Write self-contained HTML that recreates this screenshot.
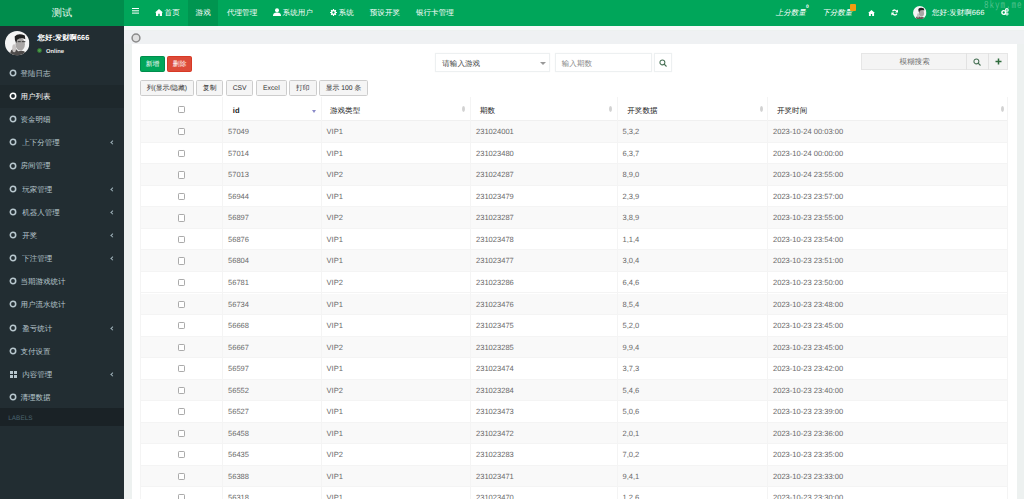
<!DOCTYPE html>
<html><head><meta charset="utf-8">
<style>
*{box-sizing:border-box;margin:0;padding:0}
html,body{width:1024px;height:499px;overflow:hidden}
body{position:relative;text-rendering:geometricPrecision;background:#edf1f0;font-family:"Liberation Sans",sans-serif;font-size:7.56px;color:#333;line-height:1}
.abs{position:absolute}
/* header */
#logo{position:absolute;left:0;top:0;width:124px;height:25.7px;background:#008d4c;color:#e6f8ee;font-size:10.2px;text-align:center;line-height:27.8px}
#nav{position:absolute;left:124px;top:0;width:900px;height:25.7px;background:#00a65a;color:#fff}
#nav .it{position:absolute;top:0;height:25.7px;line-height:25.7px;white-space:nowrap;font-size:7.56px}
#nav .act{background:rgba(0,0,0,0.1)}
.burger{position:absolute;left:8px;top:8.1px;width:7px;height:1.4px;background:#fff;box-shadow:0 2.3px 0 #fff,0 4.6px 0 #fff}
#wm{position:absolute;left:983.6px;top:1.2px;font-family:"Liberation Mono",monospace;font-size:10.6px;line-height:10px;color:rgba(255,255,255,0.32);letter-spacing:1.3px;white-space:nowrap;transform:scaleX(0.72);transform-origin:0 0}
/* sidebar */
#side{position:absolute;left:0;top:25.7px;width:124px;height:473.3px;background:#222d32}
.mi{position:absolute;left:0;width:124px;color:#b8c7ce}
.mi.active{background:#1e282c;color:#fff}
.mi .circ{position:absolute;left:8.8px;top:50%;margin-top:-4px;overflow:visible}
.mi .grid{position:absolute;left:9.3px;top:50%;margin-top:-3.4px;width:7px;height:7px}
.mi .grid i{position:absolute;width:3.1px;height:3.1px;background:#b8c7ce}
.mi .grid i:nth-child(1){left:0;top:0}.mi .grid i:nth-child(2){left:3.9px;top:0}
.mi .grid i:nth-child(3){left:0;top:3.9px}.mi .grid i:nth-child(4){left:3.9px;top:3.9px}
.mi .mt{position:absolute;top:50%;margin-top:-3.1px;line-height:8px;font-size:7.5px;white-space:nowrap}
.mi .arr{position:absolute;left:111.2px;top:50%;margin-top:-1.0px;width:3.1px;height:3.1px;border-left:1.1px solid #9fb1b9;border-bottom:1.1px solid #9fb1b9;transform:rotate(45deg)}
#labels{position:absolute;left:0;top:408.2px;width:124px;height:17.8px;background:#1a2226;color:#4b646f;font-size:6.4px;line-height:21.6px;padding-left:8.3px}
#upanel{position:absolute;left:0;top:25.7px;width:124px;height:36px}
.av{position:absolute;border-radius:50%;overflow:hidden;background:#eee}
/* content */
#strip{position:absolute;left:124px;top:25.7px;width:900px;height:4.8px;background:#f6f9f8}
#crumb{position:absolute;left:124px;top:30.5px;width:900px;height:13.5px;background:#eff1f3}
#box{position:absolute;left:132px;top:44px;width:885px;height:460px;background:#fff}
.btn{position:absolute;height:16.2px;line-height:16px;text-align:center;font-size:6.8px;border-radius:1.6px;white-space:nowrap}
.bg{background:#00a65a;color:#fff;border:1px solid #008d4c}
.br{background:#dd4b39;color:#fff;border:1px solid #d73925}
.bd{background:#f5f5f5;color:#333;border:1px solid #cdcdcd;top:79.5px}
.inp{position:absolute;top:53.3px;height:19px;border:1px solid #edf0f1;box-shadow:0 0 1px rgba(0,0,0,0.05);background:#fff;font-size:7.56px;line-height:19.5px;white-space:nowrap}
/* table */
#tbl{position:absolute;left:140px;top:97px;width:868px;height:420px}
.th{position:absolute;top:0;height:24.3px;width:868px;background:#fff;border-bottom:1px solid #f0f0f0}
.th .h{position:absolute;top:1.5px;line-height:24.3px;font-weight:normal;color:#222;font-size:7.56px;white-space:nowrap}
.vl{position:absolute;top:0;width:1px;height:420px;background:#f4f4f4}
.row{position:absolute;left:0;width:868px;height:21.525px;border-bottom:1px solid #f4f4f4}
.row.odd{background:#f9f9f9}
.td{position:absolute;top:0;line-height:21.525px;color:#6a6a6a;font-size:7.56px;white-space:nowrap}
.cb{position:absolute;top:7px;width:7.2px;height:7.2px;border:1px solid #aaa;border-radius:1.2px;background:#fff}
.sorti{position:absolute;width:3px;height:6px}
</style></head><body>

<div id="logo">测试</div>
<div id="nav">
  <div class="burger"></div>
  <div class="it" style="left:30.5px"><svg width="8" height="7" viewBox="0 0 16 14" style="vertical-align:-0.5px"><path d="M8 0 L0 7 L2 7 L2 14 L6.5 14 L6.5 9.5 L9.5 9.5 L9.5 14 L14 14 L14 7 L16 7 Z" fill="#fff"/></svg> 首页</div>
  <div class="it act" style="left:64px;width:30.3px;text-align:center">游戏</div>
  <div class="it" style="left:103px">代理管理</div>
  <div class="it" style="left:148.5px"><svg width="8" height="8" viewBox="0 0 16 16" style="vertical-align:-1px"><circle cx="8" cy="4.5" r="4" fill="#fff"/><path d="M0 16 C0 10 4 9 8 9 C12 9 16 10 16 16 Z" fill="#fff"/></svg> 系统用户</div>
  <div class="it" style="left:205.5px"><svg width="7" height="7" viewBox="0 0 16 16" style="vertical-align:-0.5px"><path fill-rule="evenodd" d="M15.78 6.61 L15.78 9.39 L13.83 9.40 L13.12 11.13 L14.48 12.52 L12.52 14.48 L11.13 13.12 L9.40 13.83 L9.39 15.78 L6.61 15.78 L6.60 13.83 L4.87 13.12 L3.48 14.48 L1.52 12.52 L2.88 11.13 L2.17 9.40 L0.22 9.39 L0.22 6.61 L2.17 6.60 L2.88 4.87 L1.52 3.48 L3.48 1.52 L4.87 2.88 L6.60 2.17 L6.61 0.22 L9.39 0.22 L9.40 2.17 L11.13 2.88 L12.52 1.52 L14.48 3.48 L13.12 4.87 L13.83 6.60Z M8 5.4 A2.6 2.6 0 1 0 8 10.6 A2.6 2.6 0 1 0 8 5.4Z" fill="#fff"/></svg> 系统</div>
  <div class="it" style="left:245.8px">预设开奖</div>
  <div class="it" style="left:292px">银行卡管理</div>

  <div class="it" style="left:651.7px;font-style:italic;font-size:7.56px">上分数量</div>
  <div class="abs" style="left:682px;top:4.8px;font-size:5px;color:#fff;font-weight:bold">0</div>
  <div class="it" style="left:698.2px;font-style:italic;font-size:7.56px">下分数量</div>
  <div class="abs" style="left:726px;top:4px;width:5.7px;height:6.5px;background:#f39c12;border-radius:1px"></div>
  <svg class="abs" style="left:744px;top:9.5px" width="7" height="6" viewBox="0 0 16 14"><path d="M8 0 L0 7 L2 7 L2 14 L6.5 14 L6.5 9.5 L9.5 9.5 L9.5 14 L14 14 L14 7 L16 7 Z" fill="#fff"/></svg>
  <svg class="abs" style="left:766.6px;top:8.8px" width="7.4" height="7" viewBox="0 0 16 16"><path d="M13.2 6.2 A5.6 5.6 0 0 0 3 5.2" fill="none" stroke="#fff" stroke-width="3"/><path d="M2.8 9.8 A5.6 5.6 0 0 0 13 10.8" fill="none" stroke="#fff" stroke-width="3"/><path d="M15.6 1.2 L15.6 8.2 L8.8 8.2 Z" fill="#fff"/><path d="M0.4 14.8 L0.4 7.8 L7.2 7.8 Z" fill="#fff"/></svg>
  <svg class="abs" style="left:789.4px;top:5.6px" width="13.5" height="13.5" viewBox="0 0 24 24"><g clip-path="url(#ac)"><rect width="24" height="24" fill="#f4f4f4"/><ellipse cx="15" cy="13" rx="4.6" ry="6.2" fill="#a9a6a5"/><path d="M9.5 5.5 Q13 1.5 19.5 4.5 L20 8 Q16 6 12 8.5 L11 12 Q9.3 9 9.5 5.5Z" fill="#222"/><path d="M4 25 L6 19 Q8 17 11 18 L13 20 Q16 19 19 20 L21 25Z" fill="#6a5555"/><ellipse cx="9" cy="17" rx="1.9" ry="4" fill="#c7c3c2"/></g></svg>
  <div class="it" style="left:808px">您好:发财啊666</div>
  <svg class="abs" style="left:877px;top:8.3px" width="8" height="7.5" viewBox="0 0 16 15"><circle cx="5.5" cy="9" r="3.7" fill="none" stroke="#fff" stroke-width="2.8"/><circle cx="11.8" cy="3.8" r="2.6" fill="none" stroke="#fff" stroke-width="2.2"/><circle cx="12" cy="12" r="2.2" fill="none" stroke="#fff" stroke-width="2"/></svg>
</div>
<div id="wm">8kym.me</div>

<div id="side">
</div>
<svg class="abs" style="left:5.4px;top:31.2px" width="24.4" height="24.4" viewBox="0 0 24 24"><defs><clipPath id="ac"><circle cx="12" cy="12" r="12"/></clipPath></defs><g clip-path="url(#ac)"><rect width="24" height="24" fill="#f4f4f4"/><ellipse cx="15" cy="13" rx="4.6" ry="6.2" fill="#a9a6a5"/><path d="M9.5 5.5 Q13 1.5 19.5 4.5 L20 8 Q16 6 12 8.5 L11 12 Q9.3 9 9.5 5.5Z" fill="#222"/><path d="M16.5 10.5 h3.5 M12.5 10.5 h3" stroke="#333" stroke-width="0.9"/><path d="M4 25 L6 19 Q8 17 11 18 L13 20 Q16 19 19 20 L21 25Z" fill="#4e4b4a"/><ellipse cx="9" cy="17" rx="1.9" ry="4" fill="#c7c3c2"/></g></svg>
<div class="abs" style="left:37.6px;top:34px;color:#fff;font-weight:bold;font-size:7.4px;white-space:nowrap">您好:发财啊666</div>
<div class="abs" style="left:37.3px;top:48.3px;width:4.8px;height:4.8px;border-radius:50%;background:#4a9a48;border:1px solid #2f6b32"></div>
<div class="abs" style="left:46px;top:49.1px;color:#eee;font-size:5.8px;line-height:6px;font-weight:bold;white-space:nowrap">Online</div>
<div class="mi" style="top:61.42px;height:23.15px"><svg class="circ" width="8" height="8" viewBox="0 0 8 8"><circle cx="4" cy="4" r="2.7" fill="none" stroke="currentColor" stroke-width="1.55"/></svg><span class="mt" style="left:20.5px">登陆日志</span></div>
<div class="mi active" style="top:84.58px;height:23.15px"><svg class="circ" width="8" height="8" viewBox="0 0 8 8"><circle cx="4" cy="4" r="2.7" fill="none" stroke="currentColor" stroke-width="1.55"/></svg><span class="mt" style="left:20.5px">用户列表</span></div>
<div class="mi" style="top:107.72px;height:23.15px"><svg class="circ" width="8" height="8" viewBox="0 0 8 8"><circle cx="4" cy="4" r="2.7" fill="none" stroke="currentColor" stroke-width="1.55"/></svg><span class="mt" style="left:20.5px">资金明细</span></div>
<div class="mi" style="top:130.88px;height:23.15px"><svg class="circ" width="8" height="8" viewBox="0 0 8 8"><circle cx="4" cy="4" r="2.7" fill="none" stroke="currentColor" stroke-width="1.55"/></svg><span class="mt" style="left:22.2px">上下分管理</span><span class="arr"></span></div>
<div class="mi" style="top:154.03px;height:23.15px"><svg class="circ" width="8" height="8" viewBox="0 0 8 8"><circle cx="4" cy="4" r="2.7" fill="none" stroke="currentColor" stroke-width="1.55"/></svg><span class="mt" style="left:20.5px">房间管理</span></div>
<div class="mi" style="top:177.18px;height:23.15px"><svg class="circ" width="8" height="8" viewBox="0 0 8 8"><circle cx="4" cy="4" r="2.7" fill="none" stroke="currentColor" stroke-width="1.55"/></svg><span class="mt" style="left:22.2px">玩家管理</span><span class="arr"></span></div>
<div class="mi" style="top:200.32px;height:23.15px"><svg class="circ" width="8" height="8" viewBox="0 0 8 8"><circle cx="4" cy="4" r="2.7" fill="none" stroke="currentColor" stroke-width="1.55"/></svg><span class="mt" style="left:22.2px">机器人管理</span><span class="arr"></span></div>
<div class="mi" style="top:223.47px;height:23.15px"><svg class="circ" width="8" height="8" viewBox="0 0 8 8"><circle cx="4" cy="4" r="2.7" fill="none" stroke="currentColor" stroke-width="1.55"/></svg><span class="mt" style="left:22.2px">开奖</span><span class="arr"></span></div>
<div class="mi" style="top:246.62px;height:23.15px"><svg class="circ" width="8" height="8" viewBox="0 0 8 8"><circle cx="4" cy="4" r="2.7" fill="none" stroke="currentColor" stroke-width="1.55"/></svg><span class="mt" style="left:22.2px">下注管理</span><span class="arr"></span></div>
<div class="mi" style="top:269.78px;height:23.15px"><svg class="circ" width="8" height="8" viewBox="0 0 8 8"><circle cx="4" cy="4" r="2.7" fill="none" stroke="currentColor" stroke-width="1.55"/></svg><span class="mt" style="left:20.5px">当期游戏统计</span></div>
<div class="mi" style="top:292.93px;height:23.15px"><svg class="circ" width="8" height="8" viewBox="0 0 8 8"><circle cx="4" cy="4" r="2.7" fill="none" stroke="currentColor" stroke-width="1.55"/></svg><span class="mt" style="left:20.5px">用户流水统计</span></div>
<div class="mi" style="top:316.07px;height:23.15px"><svg class="circ" width="8" height="8" viewBox="0 0 8 8"><circle cx="4" cy="4" r="2.7" fill="none" stroke="currentColor" stroke-width="1.55"/></svg><span class="mt" style="left:22.2px">盈亏统计</span><span class="arr"></span></div>
<div class="mi" style="top:339.22px;height:23.15px"><svg class="circ" width="8" height="8" viewBox="0 0 8 8"><circle cx="4" cy="4" r="2.7" fill="none" stroke="currentColor" stroke-width="1.55"/></svg><span class="mt" style="left:20.5px">支付设置</span></div>
<div class="mi" style="top:362.38px;height:23.15px"><span class="mt" style="left:22.2px">内容管理</span><span class="arr"></span></div>
<div class="mi" style="top:385.52px;height:23.15px"><svg class="circ" width="8" height="8" viewBox="0 0 8 8"><circle cx="4" cy="4" r="2.7" fill="none" stroke="currentColor" stroke-width="1.55"/></svg><span class="mt" style="left:20.5px">清理数据</span></div>
<div id="labels">LABELS</div>
<div class="abs" style="left:9.5px;top:370.6px;width:3px;height:3px;background:#b8c7ce"></div>
<div class="abs" style="left:13.6px;top:370.6px;width:3px;height:3px;background:#b8c7ce"></div>
<div class="abs" style="left:9.5px;top:374.6px;width:3px;height:3px;background:#b8c7ce"></div>
<div class="abs" style="left:13.6px;top:374.6px;width:3px;height:3px;background:#b8c7ce"></div>

<div id="strip"></div>
<div id="crumb"></div>
<svg class="abs" style="left:131.2px;top:33px" width="10" height="10" viewBox="0 0 10 10"><circle cx="5" cy="5" r="3.9" fill="#e0e0e0" stroke="#8a8a8a" stroke-width="1.5"/></svg>
<div id="box"></div>

<div class="btn bg" style="left:140px;top:55.6px;width:25px;">新增</div>
<div class="btn br" style="left:167.3px;top:55.6px;width:24.7px;">删除</div>

<div class="btn bd" style="left:140.3px;width:53.3px">列(显示/隐藏)</div>
<div class="btn bd" style="left:196.2px;width:26.9px">复制</div>
<div class="btn bd" style="left:225.8px;width:27.7px">CSV</div>
<div class="btn bd" style="left:256.1px;width:30.5px">Excel</div>
<div class="btn bd" style="left:288.9px;width:27.9px">打印</div>
<div class="btn bd" style="left:319.1px;width:48.7px">显示 100 条</div>

<div class="inp" style="left:435.3px;width:114.3px;padding-left:6px;color:#444">请输入游戏<span class="abs" style="left:103.5px;top:8px;width:0;height:0;border-left:3px solid transparent;border-right:3px solid transparent;border-top:3px solid #999"></span></div>
<div class="inp" style="left:555.3px;width:97px;padding-left:5.5px;color:#8a8a8a">输入期数</div>
<div class="inp" style="left:654px;width:18px"><svg class="abs" style="left:4.4px;top:5px" width="8" height="8" viewBox="0 0 16 16"><circle cx="6.8" cy="6.8" r="4.9" fill="none" stroke="#456f53" stroke-width="2.1"/><path d="M10.3 10.3 L14.3 14.3" stroke="#456f53" stroke-width="2.6" stroke-linecap="round"/></svg></div>

<div class="abs" style="left:861.3px;top:53.1px;width:147px;height:17px;background:#f4f4f4;border:1px solid #e6e6e6"></div>
<div class="abs" style="left:966.2px;top:53.1px;width:1px;height:17px;background:#e2e2e2"></div>
<div class="abs" style="left:987.5px;top:53.1px;width:1px;height:17px;background:#e2e2e2"></div>
<div class="abs" style="left:899.5px;top:58.2px;color:#707070;font-size:7.56px;white-space:nowrap">模糊搜索</div>
<svg class="abs" style="left:973px;top:58px" width="8" height="8" viewBox="0 0 16 16"><circle cx="6.8" cy="6.8" r="4.9" fill="none" stroke="#456f53" stroke-width="2.1"/><path d="M10.3 10.3 L14.3 14.3" stroke="#456f53" stroke-width="2.6" stroke-linecap="round"/></svg>
<svg class="abs" style="left:994.5px;top:58.2px" width="7" height="7" viewBox="0 0 14 14"><path d="M7 1 V13 M1 7 H13" stroke="#2f6b3d" stroke-width="3"/></svg>

<div id="tbl">
  <div class="th">
    <span class="cb" style="left:37.9px;top:8.7px"></span>
    <span class="h" style="left:92.8px;font-weight:bold;-webkit-text-stroke:0">id</span>
    <span class="abs" style="left:172.4px;top:13px;width:0;height:0;border-left:2.2px solid transparent;border-right:2.2px solid transparent;border-top:3px solid #8a8ac8"></span>
    <span class="h" style="left:190px">游戏类型</span>
    <span class="h" style="left:340px">期数</span>
    <span class="h" style="left:487.3px">开奖数据</span>
    <span class="h" style="left:637px">开奖时间</span>
  </div>
<div class="row odd" style="top:24.300px"><span class="cb" style="left:37.9px"></span><span class="td" style="left:88.0px">57049</span><span class="td" style="left:186.5px">VIP1</span><span class="td" style="left:336.0px">231024001</span><span class="td" style="left:482.5px">5,3,2</span><span class="td" style="left:633.0px">2023-10-24 00:03:00</span></div>
<div class="row" style="top:45.825px"><span class="cb" style="left:37.9px"></span><span class="td" style="left:88.0px">57014</span><span class="td" style="left:186.5px">VIP1</span><span class="td" style="left:336.0px">231023480</span><span class="td" style="left:482.5px">6,3,7</span><span class="td" style="left:633.0px">2023-10-24 00:00:00</span></div>
<div class="row odd" style="top:67.350px"><span class="cb" style="left:37.9px"></span><span class="td" style="left:88.0px">57013</span><span class="td" style="left:186.5px">VIP2</span><span class="td" style="left:336.0px">231024287</span><span class="td" style="left:482.5px">8,9,0</span><span class="td" style="left:633.0px">2023-10-24 23:55:00</span></div>
<div class="row" style="top:88.875px"><span class="cb" style="left:37.9px"></span><span class="td" style="left:88.0px">56944</span><span class="td" style="left:186.5px">VIP1</span><span class="td" style="left:336.0px">231023479</span><span class="td" style="left:482.5px">2,3,9</span><span class="td" style="left:633.0px">2023-10-23 23:57:00</span></div>
<div class="row odd" style="top:110.400px"><span class="cb" style="left:37.9px"></span><span class="td" style="left:88.0px">56897</span><span class="td" style="left:186.5px">VIP2</span><span class="td" style="left:336.0px">231023287</span><span class="td" style="left:482.5px">3,8,9</span><span class="td" style="left:633.0px">2023-10-23 23:55:00</span></div>
<div class="row" style="top:131.925px"><span class="cb" style="left:37.9px"></span><span class="td" style="left:88.0px">56876</span><span class="td" style="left:186.5px">VIP1</span><span class="td" style="left:336.0px">231023478</span><span class="td" style="left:482.5px">1,1,4</span><span class="td" style="left:633.0px">2023-10-23 23:54:00</span></div>
<div class="row odd" style="top:153.450px"><span class="cb" style="left:37.9px"></span><span class="td" style="left:88.0px">56804</span><span class="td" style="left:186.5px">VIP1</span><span class="td" style="left:336.0px">231023477</span><span class="td" style="left:482.5px">3,0,4</span><span class="td" style="left:633.0px">2023-10-23 23:51:00</span></div>
<div class="row" style="top:174.975px"><span class="cb" style="left:37.9px"></span><span class="td" style="left:88.0px">56781</span><span class="td" style="left:186.5px">VIP2</span><span class="td" style="left:336.0px">231023286</span><span class="td" style="left:482.5px">6,4,6</span><span class="td" style="left:633.0px">2023-10-23 23:50:00</span></div>
<div class="row odd" style="top:196.500px"><span class="cb" style="left:37.9px"></span><span class="td" style="left:88.0px">56734</span><span class="td" style="left:186.5px">VIP1</span><span class="td" style="left:336.0px">231023476</span><span class="td" style="left:482.5px">8,5,4</span><span class="td" style="left:633.0px">2023-10-23 23:48:00</span></div>
<div class="row" style="top:218.025px"><span class="cb" style="left:37.9px"></span><span class="td" style="left:88.0px">56668</span><span class="td" style="left:186.5px">VIP1</span><span class="td" style="left:336.0px">231023475</span><span class="td" style="left:482.5px">5,2,0</span><span class="td" style="left:633.0px">2023-10-23 23:45:00</span></div>
<div class="row odd" style="top:239.550px"><span class="cb" style="left:37.9px"></span><span class="td" style="left:88.0px">56667</span><span class="td" style="left:186.5px">VIP2</span><span class="td" style="left:336.0px">231023285</span><span class="td" style="left:482.5px">9,9,4</span><span class="td" style="left:633.0px">2023-10-23 23:45:00</span></div>
<div class="row" style="top:261.075px"><span class="cb" style="left:37.9px"></span><span class="td" style="left:88.0px">56597</span><span class="td" style="left:186.5px">VIP1</span><span class="td" style="left:336.0px">231023474</span><span class="td" style="left:482.5px">3,7,3</span><span class="td" style="left:633.0px">2023-10-23 23:42:00</span></div>
<div class="row odd" style="top:282.600px"><span class="cb" style="left:37.9px"></span><span class="td" style="left:88.0px">56552</span><span class="td" style="left:186.5px">VIP2</span><span class="td" style="left:336.0px">231023284</span><span class="td" style="left:482.5px">5,4,6</span><span class="td" style="left:633.0px">2023-10-23 23:40:00</span></div>
<div class="row" style="top:304.125px"><span class="cb" style="left:37.9px"></span><span class="td" style="left:88.0px">56527</span><span class="td" style="left:186.5px">VIP1</span><span class="td" style="left:336.0px">231023473</span><span class="td" style="left:482.5px">5,0,6</span><span class="td" style="left:633.0px">2023-10-23 23:39:00</span></div>
<div class="row odd" style="top:325.650px"><span class="cb" style="left:37.9px"></span><span class="td" style="left:88.0px">56458</span><span class="td" style="left:186.5px">VIP1</span><span class="td" style="left:336.0px">231023472</span><span class="td" style="left:482.5px">2,0,1</span><span class="td" style="left:633.0px">2023-10-23 23:36:00</span></div>
<div class="row" style="top:347.175px"><span class="cb" style="left:37.9px"></span><span class="td" style="left:88.0px">56435</span><span class="td" style="left:186.5px">VIP2</span><span class="td" style="left:336.0px">231023283</span><span class="td" style="left:482.5px">7,0,2</span><span class="td" style="left:633.0px">2023-10-23 23:35:00</span></div>
<div class="row odd" style="top:368.700px"><span class="cb" style="left:37.9px"></span><span class="td" style="left:88.0px">56388</span><span class="td" style="left:186.5px">VIP1</span><span class="td" style="left:336.0px">231023471</span><span class="td" style="left:482.5px">9,4,1</span><span class="td" style="left:633.0px">2023-10-23 23:33:00</span></div>
<div class="row" style="top:390.225px"><span class="cb" style="left:37.9px"></span><span class="td" style="left:88.0px">56318</span><span class="td" style="left:186.5px">VIP1</span><span class="td" style="left:336.0px">231023470</span><span class="td" style="left:482.5px">1,2,6</span><span class="td" style="left:633.0px">2023-10-23 23:30:00</span></div>
  <div class="vl" style="left:0"></div>
  <div class="vl" style="left:82px"></div>
  <div class="vl" style="left:180.5px"></div>
  <div class="vl" style="left:330px"></div>
  <div class="vl" style="left:476.5px"></div>
  <div class="vl" style="left:627px"></div>
  <div class="vl" style="left:867px"></div>
  <span class="abs" style="left:322.2px;top:8.8px;width:3.2px;height:6.2px;background:#d2d2d2;border-radius:50%"></span>
  <span class="abs" style="left:469.0px;top:8.8px;width:3.2px;height:6.2px;background:#d2d2d2;border-radius:50%"></span>
  <span class="abs" style="left:619.5px;top:8.8px;width:3.2px;height:6.2px;background:#d2d2d2;border-radius:50%"></span>
  <span class="abs" style="left:860.7px;top:8.8px;width:3.2px;height:6.2px;background:#d2d2d2;border-radius:50%"></span>
</div>

</body></html>
